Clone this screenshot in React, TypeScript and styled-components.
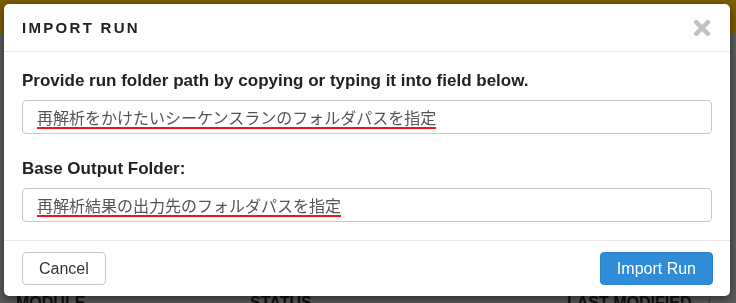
import React from "react";
import styled, { createGlobalStyle } from "styled-components";
import { FaTimes } from "react-icons/fa";

const GlobalStyle = createGlobalStyle`
  html, body {
    margin: 0;
    padding: 0;
    height: 100%;
    overflow: hidden;
    font-family: "Liberation Sans", Arial, sans-serif;
  }
`;

const Page = styled.div`
  height: 303px;
  background-color: #b5b5b5;
`;

const Navbar = styled.div`
  height: 34px;
  background-color: #f6b80a;
`;

const TableHead = styled.div`
  display: grid;
  grid-template-columns: 234px 317px 138px 1fr;
  margin-top: 259px;
  padding-left: 16px;
  font-size: 16px;
  line-height: 20px;
  font-weight: 700;
  color: #222;
  text-transform: uppercase;
`;

const Overlay = styled.div`
  position: fixed;
  inset: 0;
  background-color: rgba(0, 0, 0, 0.5);
  display: flex;
  align-items: flex-start;
`;

const Modal = styled.div`
  flex: 1;
  margin: 4px 6px 0 4px;
  background: #fff;
  border-radius: 5px;
  box-shadow: 0 3px 9px rgba(0, 0, 0, 0.5);
  display: flex;
  flex-direction: column;
`;

const Header = styled.div`
  height: 47px;
  display: flex;
  align-items: center;
  justify-content: space-between;
  padding: 0 18px;
  border-bottom: 1px solid #e8e8e8;
`;

const Title = styled.h4`
  margin: 0;
  font-size: 15px;
  font-weight: 700;
  letter-spacing: 2.3px;
  color: #222;
`;

const CloseButton = styled.button`
  border: none;
  background: none;
  padding: 0;
  margin-right: -2px;
  display: flex;
  color: #c2c2c2;
  cursor: pointer;
`;

const Body = styled.div`
  padding: 18px 18px;
  display: flex;
  flex-direction: column;
`;

const Group = styled.div<{ $last?: boolean }>`
  display: flex;
  flex-direction: column;
  gap: 8px;
  margin-bottom: ${(p) => (p.$last ? "0" : "24px")};
`;

const Label = styled.label`
  font-size: 17px;
  line-height: 22px;
  font-weight: 700;
  color: #222;
`;

const Field = styled.div`
  height: 34px;
  box-sizing: border-box;
  border: 1px solid #c8c8c8;
  border-radius: 4px;
  padding: 0 14px;
  display: flex;
  align-items: center;
`;

const Hint = styled.span`
  font-family: "Noto Sans CJK JP", sans-serif;
  font-size: 16px;
  line-height: 18px;
  color: #555;
  padding-bottom: 1px;
  border-bottom: 2px solid #f0141e;
  margin-top: 3px;
`;

const Footer = styled.div`
  border-top: 1px solid #e8e8e8;
  padding: 11px 17px 11px 18px;
  display: flex;
  justify-content: space-between;
`;

const Button = styled.button<{ $primary?: boolean }>`
  height: 33px;
  padding: 0 16px;
  font-family: "Liberation Sans", Arial, sans-serif;
  font-size: 16px;
  border-radius: 4px;
  cursor: pointer;
  border: 1px solid ${(p) => (p.$primary ? "#2a83cc" : "#c8c8c8")};
  background-color: ${(p) => (p.$primary ? "#308cd6" : "#fff")};
  color: ${(p) => (p.$primary ? "#fff" : "#333")};
`;

const App = () => {
  return (
    <>
      <GlobalStyle />
      <Page>
        <Navbar />
        <TableHead>
          <div>Module</div>
          <div>Status</div>
          <div>Last Modified</div>
          <div>↓</div>
        </TableHead>
      </Page>
      <Overlay>
        <Modal>
          <Header>
            <Title>IMPORT RUN</Title>
            <CloseButton>
              <FaTimes size={24} />
            </CloseButton>
          </Header>
          <Body>
            <Group>
              <Label>Provide run folder path by copying or typing it into field below.</Label>
              <Field>
                <Hint>再解析をかけたいシーケンスランのフォルダパスを指定</Hint>
              </Field>
            </Group>
            <Group $last>
              <Label>Base Output Folder:</Label>
              <Field>
                <Hint>再解析結果の出力先のフォルダパスを指定</Hint>
              </Field>
            </Group>
          </Body>
          <Footer>
            <Button>Cancel</Button>
            <Button $primary>Import Run</Button>
          </Footer>
        </Modal>
      </Overlay>
    </>
  );
};

export default App;
